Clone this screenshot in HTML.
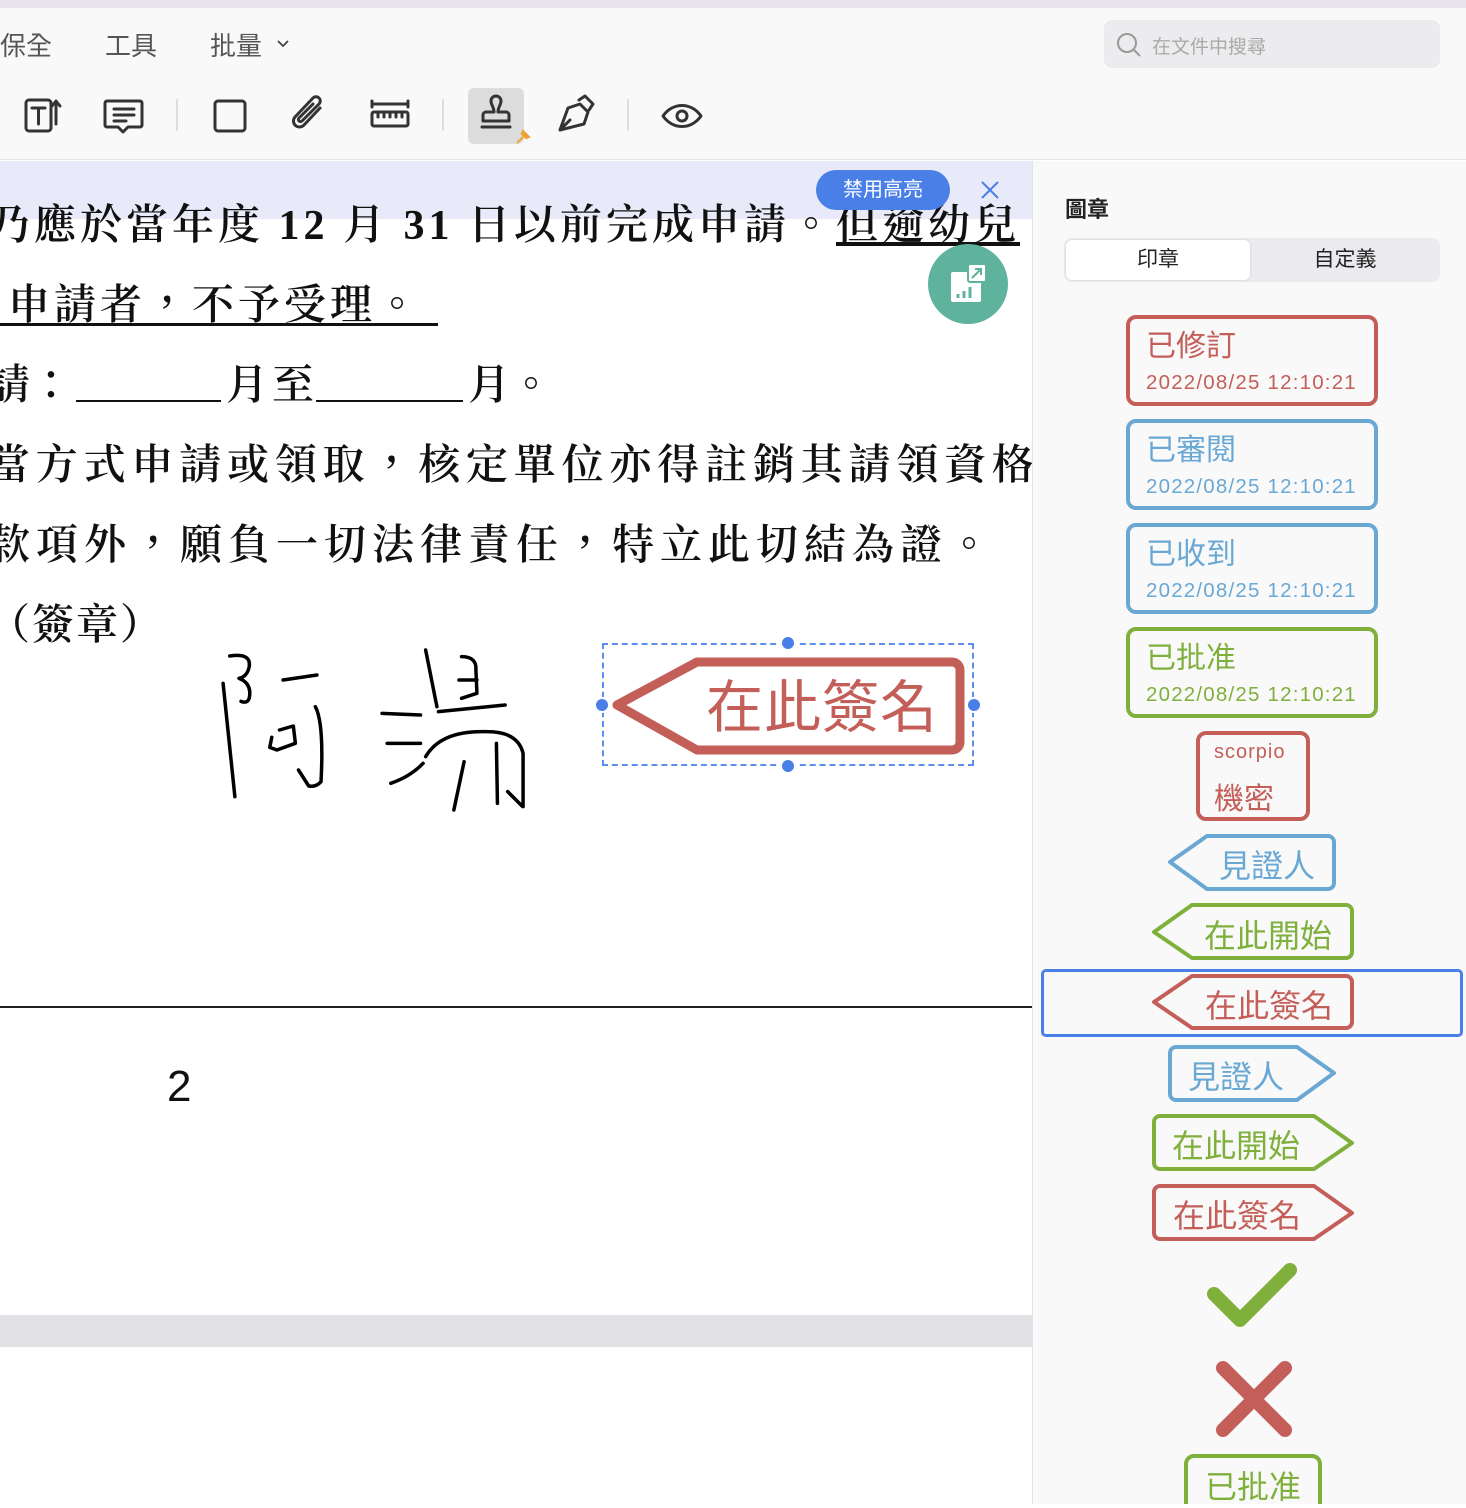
<!DOCTYPE html>
<html><head><meta charset="utf-8">
<style>
*{margin:0;padding:0;box-sizing:border-box}
body{width:1466px;height:1504px;overflow:hidden;position:relative;background:#fff;font-family:"Liberation Sans","Noto Sans CJK TC",sans-serif}
.abs{position:absolute}
.serif{font-family:"Liberation Serif","Noto Serif CJK TC",serif;color:#111;white-space:nowrap;font-size:42px;font-weight:600}
.t{font-size:30px}
.d{font-size:20.5px;letter-spacing:1.2px}
</style></head><body>
<div class="abs" style="left:0;top:0;width:1466px;height:8px;background:#e8e4ec"></div>
<div class="abs" style="left:0;top:8px;width:1466px;height:152px;background:#f9f9f9;border-bottom:1px solid #e6e6e6"></div>
<div class="abs" style="left:0;top:26px;font-size:26px;color:#555;white-space:nowrap">保全</div>
<div class="abs" style="left:105px;top:26px;font-size:26px;color:#555">工具</div>
<div class="abs" style="left:210px;top:26px;font-size:26px;color:#555">批量</div>
<svg class="abs" style="left:276px;top:38px" width="14" height="12"><path d="M2 3l5 5 5-5" fill="none" stroke="#444" stroke-width="1.8"/></svg>
<div class="abs" style="left:1104px;top:20px;width:336px;height:48px;background:#ececef;border-radius:8px"></div>
<svg class="abs" style="left:1114px;top:30px" width="30" height="30"><circle cx="13" cy="13" r="9" fill="none" stroke="#999" stroke-width="2"/><path d="M20 20l6 6" stroke="#999" stroke-width="2"/></svg>
<div class="abs" style="left:1152px;top:32px;font-size:19px;color:#aaa">在文件中搜尋</div>
<div class="abs" style="left:468px;top:88px;width:56px;height:56px;background:#dcdcdc;border-radius:6px"></div>
<svg class="abs" style="left:0;top:80px" width="740" height="80" fill="none" stroke="#333" stroke-width="3" stroke-linejoin="round" stroke-linecap="round">
<rect x="26" y="20" width="25" height="31" rx="3"/><path d="M32 28h13M38.5 28v16M56 44V22M52 26l4-5 4 5"/>
<path d="M107 21h33a2 2 0 0 1 2 2v22a2 2 0 0 1-2 2h-12l-5 5-5-5h-11a2 2 0 0 1-2-2V23a2 2 0 0 1 2-2zM114 29h20M114 35h20M114 41h12"/>
<path d="M177 20v30" stroke="#ddd" stroke-width="2"/>
<rect x="215" y="21" width="30" height="30" rx="3"/>
<path d="M320 28l-16 17a6 6 0 0 1-9-8l18-19a4 4 0 0 1 6 6l-17 17a2 2 0 0 1-3-3l14-14"/>
<path d="M372 24h36M372 21v6M408 21v6"/><rect x="372" y="32" width="36" height="14" rx="2"/><path d="M378 32v5M384 32v5M390 32v5M396 32v5M402 32v5"/>
<path d="M443 20v30" stroke="#ddd" stroke-width="2"/>
<path d="M496 16a5 5 0 0 1 5 5c0 4-3 6-3 11h8a3 3 0 0 1 3 3v6h-26v-6a3 3 0 0 1 3-3h8c0-5-3-7-3-11a5 5 0 0 1 5-5zM482 47h28"/>
<path d="M560 50l8-22 12-4 8 8-4 12zM560 50l10-10M579 20l6-4 8 8-4 6" />
<path d="M628 20v30" stroke="#ddd" stroke-width="2"/>
<path d="M663 36c10-14 28-14 38 0c-10 14-28 14-38 0z"/><circle cx="682" cy="36" r="5"/>
</svg>
<svg class="abs" style="left:514px;top:128px" width="18" height="18"><path d="M3 15l6-6M7 5l6 6M9 3l6 6-3 1-4-4z" stroke="#f0a030" stroke-width="2" fill="#f0a030"/></svg>
<div class="abs" style="left:0;top:161px;width:1032px;height:58px;background:#e9eaf9"></div>
<div class="abs serif" style="left:-12px;top:192px;letter-spacing:4px">乃應於當年度 12 月 31 日以前完成申請。<span style="text-decoration:underline">但逾幼兒</span></div>
<div class="abs serif" style="left:8px;top:272px;letter-spacing:4px">申請者，不予受理。</div>
<div class="abs" style="left:0;top:323px;width:438px;height:3px;background:#111"></div>
<div class="abs serif" style="left:-12px;top:352px">請：</div>
<div class="abs" style="left:76px;top:400px;width:145px;height:2px;background:#111"></div>
<div class="abs serif" style="left:226px;top:352px;letter-spacing:4px">月至</div>
<div class="abs" style="left:316px;top:400px;width:147px;height:2px;background:#111"></div>
<div class="abs serif" style="left:468px;top:352px">月。</div>
<div class="abs serif" style="left:-12px;top:432px;letter-spacing:5.8px">當方式申請或領取，核定單位亦得註銷其請領資格</div>
<div class="abs serif" style="left:-12px;top:512px;letter-spacing:6px">款項外，願負一切法律責任，特立此切結為證。</div>
<div class="abs serif" style="left:-12px;top:592px;letter-spacing:2px">（簽章）</div>
<div class="abs" style="left:816px;top:170px;width:134px;height:40px;border-radius:20px;background:#4a7fe8;color:#fff;font-size:20px;text-align:center;line-height:40px">禁用高亮</div>
<svg class="abs" style="left:978px;top:178px" width="24" height="24"><path d="M4 4l16 16M20 4L4 20" stroke="#4a7fe8" stroke-width="2"/></svg>
<div class="abs" style="left:928px;top:244px;width:80px;height:80px;border-radius:50%;background:#5fb39c"></div>
<svg class="abs" style="left:948px;top:264px" width="40" height="40"><rect x="3" y="8" width="30" height="30" rx="2" fill="#fff"/><rect x="20" y="0" width="18" height="18" rx="2" fill="#fff" stroke="#5fb39c" stroke-width="2"/><path d="M24 14l9-9M27 5h6v6" stroke="#5fb39c" stroke-width="2" fill="none"/><path d="M10 34v-4M16 34v-7M22 34v-11" stroke="#5fb39c" stroke-width="3"/></svg>
<svg class="abs" style="left:200px;top:630px" width="800" height="200" viewBox="0 0 1560 600" preserveAspectRatio="none" fill="none" stroke="#000" stroke-width="3.5" stroke-linecap="round" stroke-linejoin="round">
<g vector-effect="non-scaling-stroke">
<path vector-effect="non-scaling-stroke" d="M45 160L68 500"/>
<path vector-effect="non-scaling-stroke" d="M58 78Q100 68 96 110Q92 140 76 145Q102 160 96 205Q92 222 80 214"/>
<path vector-effect="non-scaling-stroke" d="M162 150L228 135"/>
<path vector-effect="non-scaling-stroke" d="M155 300L182 288L186 340L150 360L136 352L140 322"/>
<path vector-effect="non-scaling-stroke" d="M225 230Q242 280 236 455Q226 472 212 468L192 420"/>
<path vector-effect="non-scaling-stroke" d="M440 60L462 230"/>
<path vector-effect="non-scaling-stroke" d="M510 80Q540 80 538 120L540 190L510 205M505 150L540 150"/>
<path vector-effect="non-scaling-stroke" d="M465 245L595 225"/>
<path vector-effect="non-scaling-stroke" d="M355 250L430 255M365 340L430 340M372 460Q410 440 435 400"/>
<path vector-effect="non-scaling-stroke" d="M440 380Q470 300 560 305Q620 305 630 370L630 530"/>
<path vector-effect="non-scaling-stroke" d="M578 340L580 520"/>
<path vector-effect="non-scaling-stroke" d="M515 395L495 540"/>
<path vector-effect="non-scaling-stroke" d="M600 485L628 528"/>
</g>
</svg>
<div class="abs" style="left:602px;top:643px;width:372px;height:123px;border:2px dashed #5b8ef0"></div>
<svg class="abs" style="left:590px;top:630px" width="400" height="150">
<path d="M27 75L107 32H362a8 8 0 0 1 8 8V112a8 8 0 0 1-8 8H107z" fill="none" stroke="#c45e58" stroke-width="9" stroke-linejoin="round"/>
<g fill="#4a7fe8" stroke="#fff" stroke-width="2"><circle cx="198" cy="13" r="7"/><circle cx="198" cy="136" r="7"/><circle cx="12" cy="75" r="7"/><circle cx="384" cy="75" r="7"/></g>
</svg>
<div class="abs" style="left:706px;top:662px;font-size:57px;color:#c45e58;letter-spacing:1px">在此簽名</div>
<div class="abs" style="left:0;top:1006px;width:1032px;height:2px;background:#222"></div>
<div class="abs" style="left:167px;top:1062px;font-size:44px;color:#111;font-family:'Liberation Sans',sans-serif">2</div>
<div class="abs" style="left:0;top:1315px;width:1032px;height:32px;background:#e2e2e6"></div>
<div class="abs" style="left:1032px;top:161px;width:434px;height:1343px;background:#f9f9fa;border-left:1px solid #e3e3e3"></div>
<div class="abs" style="left:1065px;top:192px;font-size:22px;font-weight:700;color:#222">圖章</div>
<div class="abs" style="left:1064px;top:238px;width:376px;height:44px;background:#ebebef;border-radius:8px"></div>
<div class="abs" style="left:1066px;top:240px;width:184px;height:40px;background:#fff;border-radius:6px;box-shadow:0 0 2px #ccc;text-align:center;line-height:40px;font-size:21px;color:#222">印章</div>
<div class="abs" style="left:1252px;top:240px;width:186px;height:40px;text-align:center;line-height:40px;font-size:21px;color:#222">自定義</div>
<div class="abs" style="left:1041px;top:969px;width:422px;height:68px;border:3px solid #4a7fe8;border-radius:5px"></div>
<svg class="abs" style="left:1032px;top:300px" width="434" height="1204" fill="none" stroke-width="4" stroke-linejoin="round">
<rect x="96" y="17" width="248" height="87" rx="8" stroke="#c45e58"/>
<rect x="96" y="121" width="248" height="87" rx="8" stroke="#6aa8d4"/>
<rect x="96" y="225" width="248" height="87" rx="8" stroke="#6aa8d4"/>
<rect x="96" y="329" width="248" height="87" rx="8" stroke="#80b03c"/>
<rect x="166" y="433" width="110" height="86" rx="8" stroke="#c45e58"/>
<path d="M138 562L175 536H296a6 6 0 0 1 6 6V583a6 6 0 0 1-6 6H175z" stroke="#6aa8d4"/>
<path d="M122 632L160 605H314a6 6 0 0 1 6 6V652a6 6 0 0 1-6 6H160z" stroke="#80b03c"/>
<path d="M122 702L160 676H314a6 6 0 0 1 6 6V722a6 6 0 0 1-6 6H160z" stroke="#c45e58"/>
<path d="M302 773L265 747H144a6 6 0 0 0-6 6V794a6 6 0 0 0 6 6H265z" stroke="#6aa8d4"/>
<path d="M320 843L282 816H128a6 6 0 0 0-6 6V863a6 6 0 0 0 6 6H282z" stroke="#80b03c"/>
<path d="M320 913L282 886H128a6 6 0 0 0-6 6V933a6 6 0 0 0 6 6H282z" stroke="#c45e58"/>
<path d="M182 994L208 1020L258 970" stroke="#80b03c" stroke-width="14" stroke-linecap="round"/>
<path d="M191 1068L253 1130M253 1068L191 1130" stroke="#c45e58" stroke-width="14" stroke-linecap="round"/>
<rect x="154" y="1156" width="134" height="70" rx="8" stroke="#80b03c"/>
</svg>
<div class="abs t" style="left:1146px;top:321px;color:#c45e58">已修訂</div>
<div class="abs d" style="left:1146px;top:371px;color:#c45e58">2022/08/25 12:10:21</div>
<div class="abs t" style="left:1146px;top:425px;color:#6aa8d4">已審閱</div>
<div class="abs d" style="left:1146px;top:475px;color:#6aa8d4">2022/08/25 12:10:21</div>
<div class="abs t" style="left:1146px;top:529px;color:#6aa8d4">已收到</div>
<div class="abs d" style="left:1146px;top:579px;color:#6aa8d4">2022/08/25 12:10:21</div>
<div class="abs t" style="left:1146px;top:633px;color:#80b03c">已批准</div>
<div class="abs d" style="left:1146px;top:683px;color:#80b03c">2022/08/25 12:10:21</div>
<div class="abs" style="left:1214px;top:741px;font-size:20px;color:#c45e58;letter-spacing:1px">scorpio</div>
<div class="abs" style="left:1214px;top:774px;font-size:30px;color:#c45e58">機密</div>
<div class="abs" style="left:1219px;top:841px;font-size:32px;color:#6aa8d4">見證人</div>
<div class="abs" style="left:1204px;top:911px;font-size:32px;color:#80b03c">在此開始</div>
<div class="abs" style="left:1205px;top:981px;font-size:32px;color:#c45e58">在此簽名</div>
<div class="abs" style="left:1188px;top:1052px;font-size:32px;color:#6aa8d4">見證人</div>
<div class="abs" style="left:1172px;top:1121px;font-size:32px;color:#80b03c">在此開始</div>
<div class="abs" style="left:1173px;top:1191px;font-size:32px;color:#c45e58">在此簽名</div>
<div class="abs" style="left:1205px;top:1462px;font-size:32px;color:#80b03c">已批准</div>
</body></html>
